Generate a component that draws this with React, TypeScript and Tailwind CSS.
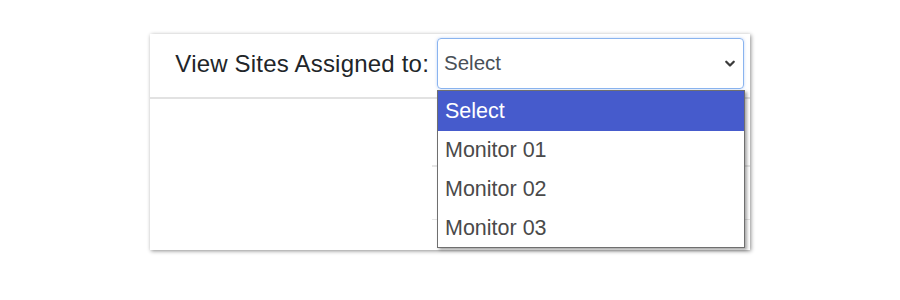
import React from "react";

export default function App() {
  const items = ["Select", "Monitor 01", "Monitor 02", "Monitor 03"];
  return (
    <div className="w-[900px] h-[300px] bg-white pt-[34px] pl-[150px] font-['Liberation_Sans',Arial,sans-serif]">
      <div className="w-[600px] h-[216px] bg-white shadow-[1px_1px_4px_rgba(0,0,0,0.45)] flex flex-col">
        <div className="h-[65px] flex items-start border-b-2 border-[#e2e2e2]">
          <div className="w-[287px] pt-[15px] pr-[8px] text-right text-[24px] leading-[30px] tracking-[0.2px] text-[#212529] whitespace-nowrap">
            View Sites Assigned to:
          </div>
          <div className="relative mt-[4px]">
            <div className="w-[307px] h-[51px] rounded-[4px] border border-[#8ab4ef] shadow-[0_0_3px_rgba(128,170,240,0.5)] flex items-center justify-between pl-[6px] pr-[5px] text-[20.5px] text-[#495057]">
              <span>Select</span>
              <svg width="16" height="12" viewBox="0 0 16 16" className="mt-[1px]">
                <path fill="none" stroke="#3b3b3b" strokeLinecap="round" strokeLinejoin="round" strokeWidth="3" d="m3 5 5 5 5-5" />
              </svg>
            </div>
            <div className="absolute left-0 top-[52px] w-[308px] bg-white border border-[#6f6f6f] shadow-[2px_2px_3px_rgba(0,0,0,0.35)] z-10">
              {items.map((it, i) => (
                <div
                  key={it}
                  className={
                    i === 0
                      ? "h-[40px] pl-[7px] flex items-center text-[21.5px] bg-[#465bcc] text-white"
                      : "h-[38.7px] pl-[7px] flex items-center text-[21.5px] text-[#4a4a4a]"
                  }
                >
                  {it}
                </div>
              ))}
            </div>
          </div>
        </div>
        <div className="flex flex-1">
          <div className="w-[282px]" />
          <div className="flex-1 flex flex-col">
            <div className="h-[68px] border-b-2 border-[#e6e6e6]" />
            <div className="h-[53px] border-b border-[#e6e6e6]" />
          </div>
        </div>
      </div>
    </div>
  );
}
